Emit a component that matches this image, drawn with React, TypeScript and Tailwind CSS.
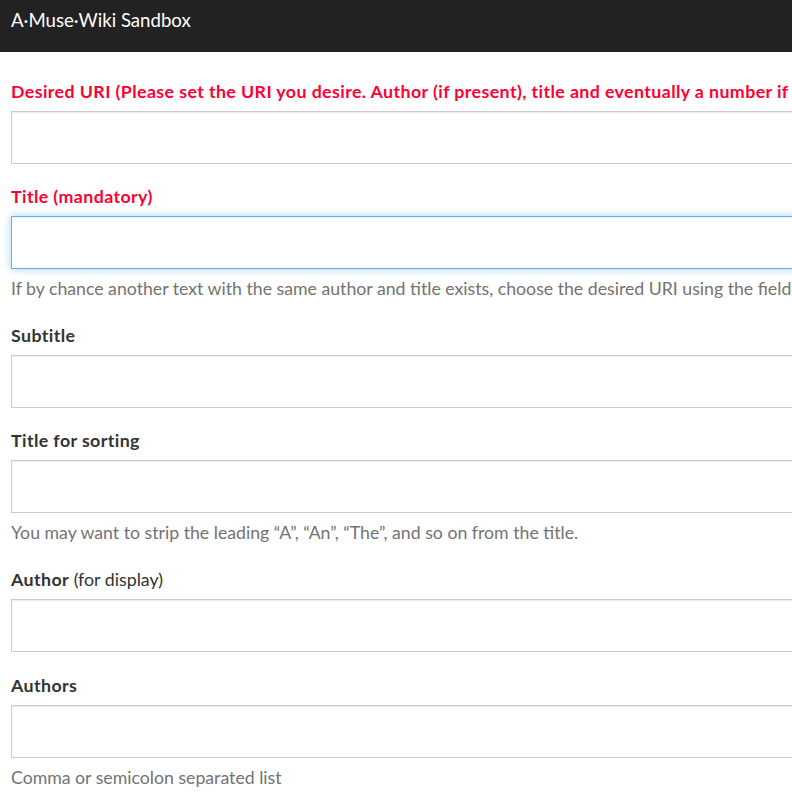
import React from "react";

const font = { fontFamily: "Lato, 'Noto Sans', sans-serif" };

function Label({ children, red }: { children: React.ReactNode; red?: boolean }) {
  return (
    <div
      className={`h-6 mb-2 text-[17.8px] leading-6 whitespace-nowrap font-bold tracking-[0.4px] ${
        red ? "text-[#ff0033]" : "text-[#333333]"
      }`}
    >
      {children}
    </div>
  );
}

function Input({ focused }: { focused?: boolean }) {
  return (
    <div
      className={
        focused
          ? "h-[53px] w-full bg-white border border-[#66afe9] shadow-[inset_0_1px_1px_rgba(0,0,0,0.075),0_0_8px_rgba(102,175,233,0.6)]"
          : "h-[53px] w-full bg-white border border-[#cccccc] shadow-[inset_0_1px_1px_rgba(0,0,0,0.075)]"
      }
    />
  );
}

function Help({ children }: { children: React.ReactNode }) {
  return (
    <div className="mt-2 h-6 text-[17.7px] leading-6 whitespace-nowrap text-[#737373]">{children}</div>
  );
}

export default function App() {
  return (
    <div className="w-[792px] h-[810px] overflow-hidden bg-white" style={font}>
      <div className="h-[52px] bg-[#222222] px-[11px] pt-[8px]">
        <div className="text-[18.6px] leading-6 text-white whitespace-nowrap">A·Muse·Wiki Sandbox</div>
      </div>
      <div className="w-[1200px] px-[11px] pt-[27px]">
        <div className="mb-5">
          <Label red>
            Desired URI (Please set the URI you desire. Author (if present), title and eventually a number if the text is already present)
          </Label>
          <Input />
        </div>
        <div className="mb-[22px]">
          <Label red>Title (mandatory)</Label>
          <Input focused />
          <Help>
            If by chance another text with the same author and title exists, choose the desired URI using the field above
          </Help>
        </div>
        <div className="mb-5">
          <Label>Subtitle</Label>
          <Input />
        </div>
        <div className="mb-[22px]">
          <Label>Title for sorting</Label>
          <Input />
          <Help>You may want to strip the leading “A”, “An”, “The”, and so on from the title.</Help>
        </div>
        <div className="mb-[21px]">
          <div className="h-6 mb-2 text-[17.8px] leading-6 whitespace-nowrap text-[#333333]">
            <span className="font-bold tracking-[0.4px]">Author</span> (for display)
          </div>
          <Input />
        </div>
        <div className="mb-[22px]">
          <Label>Authors</Label>
          <Input />
          <Help>Comma or semicolon separated list</Help>
        </div>
      </div>
    </div>
  );
}
